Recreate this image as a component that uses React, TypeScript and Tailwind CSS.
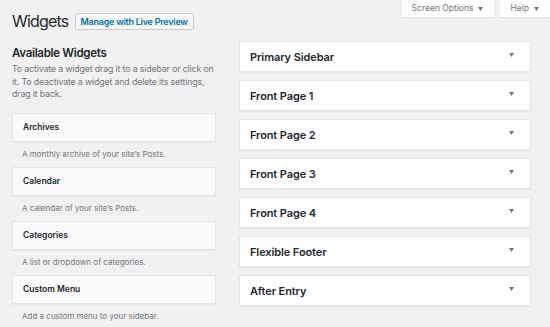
import React from 'react';

const availableWidgets = [
  { name: 'Archives', desc: "A monthly archive of your site\u2019s Posts." },
  { name: 'Calendar', desc: "A calendar of your site\u2019s Posts." },
  { name: 'Categories', desc: 'A list or dropdown of categories.' },
  { name: 'Custom Menu', desc: 'Add a custom menu to your sidebar.' },
];

const sidebars = [
  'Primary Sidebar',
  'Front Page 1',
  'Front Page 2',
  'Front Page 3',
  'Front Page 4',
  'Flexible Footer',
  'After Entry',
];

function Caret({ className = '' }: { className?: string }) {
  return (
    <svg width="5" height="4" viewBox="0 0 5 4" className={className}>
      <path d="M0 0h5L2.5 4z" fill="currentColor" />
    </svg>
  );
}

export default function App() {
  return (
    <div className="w-[550px] h-[327px] overflow-hidden bg-[#f1f1f1] text-[#23282d] font-['Inter','Liberation_Sans',sans-serif]">
      {/* Header */}
      <div className="flex items-start justify-between">
        <div className="flex items-center pl-[12px] pt-[13px]">
          <h1 className="text-[16px] leading-[17px] font-normal tracking-[-0.8px]">Widgets</h1>
          <button className="ml-[6px] h-[17px] px-[5px] bg-[#f7f7f7] border border-[#cccccc] rounded-[2px] text-[9px] tracking-[-0.25px] font-semibold text-[#0073aa] leading-none">
            Manage with Live Preview
          </button>
        </div>
        <div className="flex gap-[6px]">
          <button className="flex items-center gap-[5px] h-[17px] pl-[10px] pr-[11px] bg-white shadow-[0_1px_1px_rgba(0,0,0,0.08)] text-[8.5px] text-[#72777c]">
            Screen Options <Caret className="mt-[1px]" />
          </button>
          <button className="flex items-center gap-[5px] h-[17px] pl-[10px] pr-[11px] bg-white shadow-[0_1px_1px_rgba(0,0,0,0.08)] text-[8.5px] text-[#72777c]">
            Help <Caret className="mt-[1px]" />
          </button>
        </div>
      </div>

      {/* Main */}
      <div className="flex gap-[23px] pl-[12px] mt-[11px]">
        <div className="w-[204px]">
          <h2 className="mt-[4px] text-[11.5px] leading-[16px] font-semibold tracking-[-0.3px]">Available Widgets</h2>
          <p className="mt-[2px] mr-[-4px] text-[8.8px] leading-[12.5px] tracking-[-0.15px] text-[#72777c]">
            To activate a widget drag it to a sidebar or click on it. To deactivate a widget and delete its settings, drag it back.
          </p>
          <div className="mt-[12px] flex flex-col">
            {availableWidgets.map((w) => (
              <div key={w.name}>
                <div className="h-[29px] flex items-center pl-[10px] bg-[#fafafa] border border-[#e5e5e5] shadow-[0_1px_1px_rgba(0,0,0,0.04)] text-[8.5px] font-semibold">
                  {w.name}
                </div>
                <div className="h-[25px] flex items-center pl-[10px] text-[8px] text-[#72777c]">{w.desc}</div>
              </div>
            ))}
          </div>
        </div>

        <div className="w-[292px] flex flex-col gap-[8px]">
          {sidebars.map((s) => (
            <div
              key={s}
              className="h-[31px] flex items-start justify-between pl-[10px] pr-[16px] bg-white border border-[#e5e5e5] shadow-[0_1px_1px_rgba(0,0,0,0.04)]"
            >
              <span className="mt-[7px] text-[11px] leading-[16px] font-semibold tracking-[-0.1px]">{s}</span>
              <Caret className="mt-[11px] text-[#72777c]" />
            </div>
          ))}
        </div>
      </div>
    </div>
  );
}
